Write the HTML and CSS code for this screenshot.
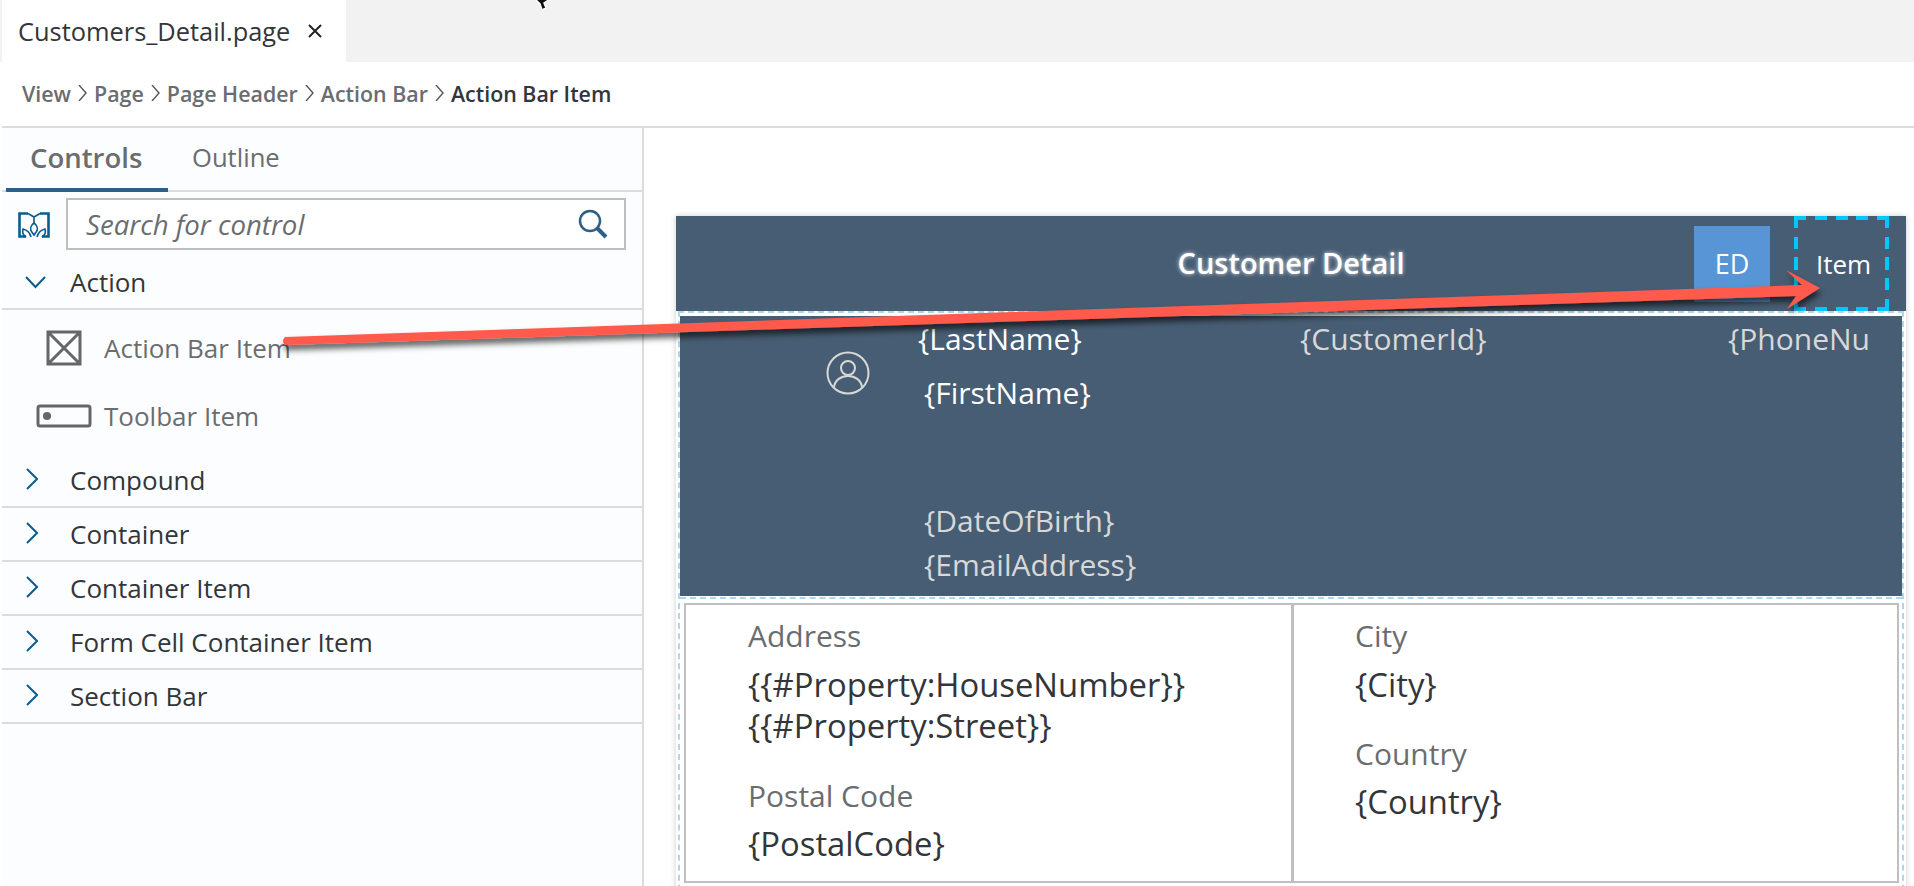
FILE: index.html
```html
<!DOCTYPE html>
<html lang="en">
  <head>
    <meta charset="UTF-8" />
    <title>Customers_Detail.page</title>
    <link rel="stylesheet" href="styles.css">
  </head>
  <body>
    <div class="tabbar">
      <div class="tab">
        <span class="tab-name">Customers_Detail.page</span>
        <svg class="tab-close" width="14" height="14" viewBox="0 0 14 14"><path d="M1 1l12 12M13 1L1 13" /></svg>
      </div>
    </div>

    <div class="crumbs">
      <span class="crumb">View</span>
      <svg class="crumb-sep" width="9" height="16" viewBox="0 0 9 16"><path d="M1 0l7 8-7 8" /></svg>
      <span class="crumb">Page</span>
      <svg class="crumb-sep" width="9" height="16" viewBox="0 0 9 16"><path d="M1 0l7 8-7 8" /></svg>
      <span class="crumb">Page Header</span>
      <svg class="crumb-sep" width="9" height="16" viewBox="0 0 9 16"><path d="M1 0l7 8-7 8" /></svg>
      <span class="crumb">Action Bar</span>
      <svg class="crumb-sep" width="9" height="16" viewBox="0 0 9 16"><path d="M1 0l7 8-7 8" /></svg>
      <span class="crumb crumb-current">Action Bar Item</span>
    </div>

    <div class="main">
      <aside class="sidebar">
        <div class="side-tabs">
          <div class="side-tab side-tab-active">Controls</div>
          <div class="side-tab">Outline</div>
        </div>

        <div class="search-row">
          <svg class="lib-icon" width="32" height="26" viewBox="0 0 32 26">
            <path class="lib-frame" d="M10 1.500H1.500v23H8M22 1.500h8.500v23H24" />
            <path d="M10 1.500l6 3.500 6-3.500M16 5v6" />
            <path d="M16 11c-3.500 2.500-4 6-2.500 8.500L16 23l2.500-3.500c1.500-2.500 1-6-2.500-8.500z" />
            <path d="M13 25c-1-4-4-7-8-8-1 3 0 6 3 8M19 25c1-4 4-7 8-8 1 3 0 6-3 8" />
          </svg>
          <div class="search-box">
            <span class="search-text">Search for control</span>
            <svg class="search-icon" width="30" height="30" viewBox="0 0 30 30">
              <circle cx="12" cy="12" r="10" />
              <path class="search-handle" d="M19 19l9 9" />
            </svg>
          </div>
        </div>

        <div class="group">
          <svg class="chev-down" width="21" height="13" viewBox="0 0 21 13"><path d="M1 1l9.500 10L20 1" /></svg>
          <span>Action</span>
        </div>
        <div class="items">
          <div class="item">
            <span class="item-icon">
              <svg width="36" height="36" viewBox="0 0 36 36"><path d="M2 2h32v32H2zM2 2l32 32M34 2L2 34" /></svg>
            </span>
            <span>Action Bar Item</span>
          </div>
          <div class="item">
            <span class="item-icon">
              <svg width="56" height="24" viewBox="0 0 56 24"><rect x="2" y="2" width="52" height="20" rx="2" /><circle class="item-dot" cx="11" cy="12" r="4" /></svg>
            </span>
            <span>Toolbar Item</span>
          </div>
        </div>
        <div class="group">
          <svg class="chev-right" width="12" height="22" viewBox="0 0 12 22"><path d="M1 1l10 10L1 21" /></svg>
          <span>Compound</span>
        </div>
        <div class="group">
          <svg class="chev-right" width="12" height="22" viewBox="0 0 12 22"><path d="M1 1l10 10L1 21" /></svg>
          <span>Container</span>
        </div>
        <div class="group">
          <svg class="chev-right" width="12" height="22" viewBox="0 0 12 22"><path d="M1 1l10 10L1 21" /></svg>
          <span>Container Item</span>
        </div>
        <div class="group">
          <svg class="chev-right" width="12" height="22" viewBox="0 0 12 22"><path d="M1 1l10 10L1 21" /></svg>
          <span>Form Cell Container Item</span>
        </div>
        <div class="group">
          <svg class="chev-right" width="12" height="22" viewBox="0 0 12 22"><path d="M1 1l10 10L1 21" /></svg>
          <span>Section Bar</span>
        </div>
      </aside>

      <section class="canvas">
        <div class="phone">
          <header class="action-bar">
            <div class="action-title">Customer Detail</div>
            <div class="action-ed">ED</div>
            <div class="action-item">Item</div>
          </header>

          <div class="phone-body">
            <div class="hero">
              <div class="hero-avatar">
                <svg width="44" height="44" viewBox="0 0 44 44">
                  <circle cx="22" cy="22" r="20.500" />
                  <circle cx="22" cy="17" r="7" />
                  <path d="M8 36c1-7 7-11 14-11s13 4 14 11" />
                </svg>
              </div>
              <div class="hero-main">
                <div class="hero-last">{LastName}</div>
                <div class="hero-first">{FirstName}</div>
                <div class="hero-sub hero-dob">{DateOfBirth}</div>
                <div class="hero-sub hero-email">{EmailAddress}</div>
              </div>
              <div class="hero-sub hero-id">{CustomerId}</div>
              <div class="hero-sub hero-phone">{PhoneNu</div>
            </div>

            <div class="form-wrap">
              <div class="form">
                <div class="form-col">
                  <div class="field-label">Address</div>
                  <div class="field-value">{{#Property:HouseNumber}}<br>{{#Property:Street}}</div>
                  <div class="field-label field-next">Postal Code</div>
                  <div class="field-value">{PostalCode}</div>
                </div>
                <div class="form-col form-col-right">
                  <div class="field-label">City</div>
                  <div class="field-value">{City}</div>
                  <div class="field-label field-next field-country">Country</div>
                  <div class="field-value">{Country}</div>
                </div>
              </div>
            </div>
          </div>
        </div>
      </section>
    </div>

    <!-- callout arrow and mouse pointer sit over the whole page -->
    <svg class="callout" width="1914" height="886" viewBox="0 0 1914 886">
      <defs>
        <filter id="arrowShadow" x="-5%" y="-50%" width="110%" height="250%">
          <feDropShadow dx="1" dy="5" stdDeviation="3" flood-color="#000" flood-opacity="0.65" />
        </filter>
      </defs>
      <path class="callout-arrow" filter="url(#arrowShadow)" d="M285 337L1802 285 1786 270 1820 288 1787 309 1796 296 285 345Q281 341 285 337z" />
    </svg>
    <svg class="pointer" width="22" height="14" viewBox="0 0 22 14">
      <path d="M5-1l5 5 2 6 4-2-2-5 6-4z" />
    </svg>
  </body>
</html>
```

FILE: styles.css
```css
* {
  box-sizing: border-box;
}
html,
body {
  margin: 0;
  height: 886px;
  overflow: hidden;
}
body {
  position: relative;
  display: flex;
  flex-direction: column;
  background: #fff;
  color: #32363a;
  font-family: "Open Sans", "Liberation Sans", sans-serif;
}
svg {
  display: block;
  flex: none;
  fill: none;
}

/* tab strip */
.tabbar {
  height: 62px;
  padding-left: 2px;
  background: #f2f2f2;
  flex: none;
}
.tab {
  width: 344px;
  height: 62px;
  padding-left: 16px;
  display: flex;
  align-items: center;
  background: #fff;
}
.tab-name {
  font-size: 25.400px;
}
.tab-close {
  margin-left: 18px;
  stroke: #222;
  stroke-width: 2;
}

/* breadcrumb */
.crumbs {
  flex: none;
  height: 66px;
  margin-left: 2px;
  padding: 0 0 2px 20px;
  display: flex;
  align-items: center;
  gap: 7px;
  border-bottom: 2px solid #dcdce0;
}
.crumb {
  font-size: 21.400px;
  font-weight: 600;
  color: #6a6d70;
}
.crumb-current {
  color: #32363a;
}
.crumb-sep {
  stroke: #555;
  stroke-width: 1.400;
}

.main {
  flex: 1;
  display: flex;
  min-height: 0;
}

/* left panel */
.sidebar {
  width: 642px;
  margin-left: 2px;
  flex: none;
  background: #fcfdfe;
  border-right: 2px solid #dcdce0;
}
.side-tabs {
  height: 64px;
  display: flex;
  padding-left: 4px;
  border-bottom: 2px solid #dcdce0;
}
.side-tab {
  height: 64px;
  padding: 0 24px;
  line-height: 60px;
  font-size: 25.600px;
  color: #6a6d70;
}
.side-tab-active {
  width: 162px;
  font-size: 27.500px;
  font-weight: 600;
  border-bottom: 4px solid #2f5f87;
}
.search-row {
  height: 64px;
  padding: 6px 0 0 16px;
  display: flex;
  align-items: flex-start;
}
.lib-icon {
  margin: 14px 16px 0 0;
  stroke: #0a5c8f;
  stroke-width: 1.600;
}
.lib-frame {
  stroke-width: 2.600;
}
.search-box {
  width: 560px;
  height: 52px;
  padding: 0 16px 0 18px;
  display: flex;
  align-items: center;
  justify-content: space-between;
  background: #fff;
  border: 2px solid #bfbfbf;
}
.search-text {
  font-size: 27.600px;
  font-style: italic;
  color: #6a6d70;
}
.search-icon {
  stroke: #2f5f87;
  stroke-width: 2.500;
}
.search-handle {
  stroke-width: 4;
}
.group {
  height: 54px;
  padding-left: 68px;
  position: relative;
  display: flex;
  align-items: center;
  font-size: 26px;
  border-bottom: 2px solid #dcdce0;
}
.chev-down,
.chev-right {
  position: absolute;
  stroke: #0a5c8f;
  stroke-width: 2;
}
.chev-down {
  left: 23px;
  top: 20px;
}
.chev-right {
  left: 24px;
  top: 14px;
}
.items {
  padding: 4px 0;
}
.item {
  height: 68px;
  display: flex;
  align-items: center;
  font-size: 26px;
  color: #6a6d70;
}
.item-icon {
  width: 102px;
  padding-left: 22px;
  display: flex;
  justify-content: center;
}
.item-icon svg {
  stroke: #666;
  stroke-width: 3;
  filter: blur(0.5px);
}
.item-icon .item-dot {
  fill: #666;
  stroke: none;
}

/* design canvas */
.canvas {
  flex: 1;
  min-width: 0;
  padding: 88px 8px 0 32px;
}
.phone {
  box-shadow: 0 0 6px rgba(0, 0, 0, 0.2);
}
.action-bar {
  height: 95px;
  position: relative;
  display: flex;
  align-items: flex-start;
  justify-content: flex-end;
  background: #475d73;
  color: #fff;
}
.action-title {
  position: absolute;
  left: 0;
  right: 0;
  top: 27px;
  text-align: center;
  font-size: 29px;
  font-weight: 600;
  text-shadow: 0 0 4px rgba(255, 255, 255, 0.8);
}
.action-ed {
  width: 76px;
  height: 76px;
  margin: 10px 24px 0 0;
  padding-top: 19px;
  text-align: center;
  font-size: 27px;
  background: #5795d7;
}
.action-item {
  width: 95px;
  height: 95px;
  margin-right: 17px;
  padding: 30px 0 0 4px;
  text-align: center;
  font-size: 26px;
  background:
    repeating-linear-gradient(90deg, #00c8ff 0 12px, transparent 12px 20.750px) top / 100% 4px no-repeat,
    repeating-linear-gradient(90deg, #00c8ff 0 12px, transparent 12px 20.750px) bottom / 100% 4px no-repeat,
    repeating-linear-gradient(0deg, #00c8ff 0 12px, transparent 12px 20.750px) left / 4px 100% no-repeat,
    repeating-linear-gradient(0deg, #00c8ff 0 12px, transparent 12px 20.750px) right / 4px 100% no-repeat;
}
.phone-body {
  margin: 0 2px;
  height: 600px;
  border: 2px dashed #aed8e6;
}
.hero {
  height: 280px;
  margin-top: 3px;
  display: flex;
  background: #475d73;
  color: #fff;
  font-size: 30px;
  line-height: 41px;
}
.hero-avatar {
  width: 190px;
  padding-top: 35px;
  display: flex;
  justify-content: flex-end;
}
.hero-avatar svg {
  stroke: #d8d8d8;
  stroke-width: 2;
}
.hero-main {
  margin-left: 54px;
  flex: none;
  width: 376px;
}
.hero-last {
  margin-left: -6px;
  padding-top: 2px;
}
.hero-first {
  margin-top: 13px;
}
.hero-sub {
  color: #d8d8d8;
}
.hero-dob {
  margin-top: 87px;
}
.hero-email {
  margin-top: 3px;
}
.hero-id {
  padding-top: 2px;
  width: 428px;
}
.hero-phone {
  padding-top: 2px;
}
.form-wrap {
  margin-top: 1px;
  padding: 4px 3px 0 4px;
  border-top: 2px dashed #aed8e6;
}
.form {
  height: 280px;
  display: flex;
  border: 2px solid #bfbfbf;
}
.form-col {
  width: 608px;
  padding: 12px 0 0 62px;
  border-right: 3px solid #bfbfbf;
}
.form-col-right {
  flex: 1;
  padding-left: 61px;
  border-right: 0;
}
.field-label {
  font-size: 30px;
  line-height: 38px;
  color: #6a6d70;
}
.field-value {
  margin-top: 9px;
  font-size: 32.800px;
  line-height: 41px;
}
.field-next {
  margin-top: 31px;
}
.field-next + .field-value {
  margin-top: 8px;
}
.field-country {
  margin-top: 30px;
}

/* overlays */
.callout {
  position: absolute;
  left: 0;
  top: 0;
  pointer-events: none;
}
.callout-arrow {
  fill: #ff5a4b;
}
.pointer {
  position: absolute;
  left: 530px;
  top: 0;
  fill: #111;
  stroke: #fff;
  stroke-width: 1.500;
}
```
